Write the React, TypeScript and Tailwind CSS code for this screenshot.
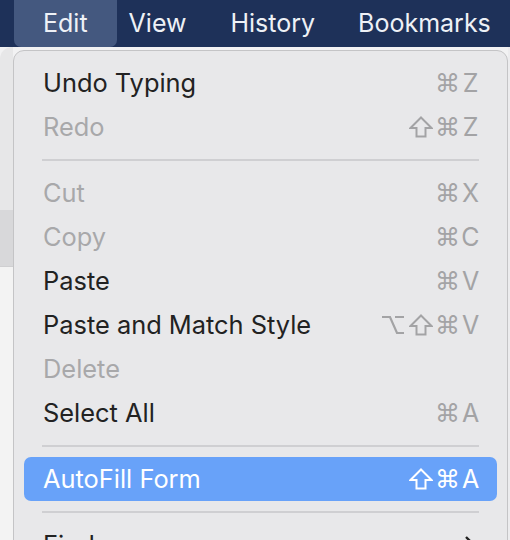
import { Fragment } from "react";

interface MenuItem {
  label: string;
  keys?: string[];
  disabled?: boolean;
  active?: boolean;
  submenu?: boolean;
  separator?: boolean;
}

const items: MenuItem[] = [
  { label: "Undo Typing", keys: ["cmd", "Z"] },
  { label: "Redo", keys: ["shift", "cmd", "Z"], disabled: true },
  { label: "", separator: true },
  { label: "Cut", keys: ["cmd", "X"], disabled: true },
  { label: "Copy", keys: ["cmd", "C"], disabled: true },
  { label: "Paste", keys: ["cmd", "V"] },
  { label: "Paste and Match Style", keys: ["opt", "shift", "cmd", "V"] },
  { label: "Delete", disabled: true },
  { label: "Select All", keys: ["cmd", "A"] },
  { label: "", separator: true },
  { label: "AutoFill Form", keys: ["shift", "cmd", "A"], active: true },
  { label: "", separator: true },
  { label: "Find", submenu: true },
];

// modifier glyphs
const KeyGlyph = ({ k, color }: { k: string; color: string }) => {
  if (k === "shift") {
    return (
      <svg width="24" height="22" viewBox="0 0 24 22">
        <path
          d="M12 1.5 L22.5 12 L16.5 12 L16.5 20.5 L7.5 20.5 L7.5 12 L1.5 12 Z"
          fill="none"
          stroke={color}
          strokeWidth="2"
          strokeLinejoin="miter"
        />
      </svg>
    );
  }
  if (k === "opt") {
    return (
      <svg width="24" height="22" viewBox="0 0 24 22">
        <path
          d="M0 3 H8 L15 19 H22 M13 3 H22"
          fill="none"
          stroke={color}
          strokeWidth="2.2"
        />
      </svg>
    );
  }
  if (k === "cmd") {
    return <span className="font-['DejaVu_Sans',sans-serif] text-[25px] leading-none">⌘</span>;
  }
  return <span className="text-[25px] leading-none">{k}</span>;
};

const App = () => {
  return (
    <div className="w-[510px] h-[540px] overflow-hidden bg-[#f2f2f3] font-['Inter','Liberation_Sans',sans-serif]">
      {/* Menu bar */}
      <div className="h-[47px] bg-[#1e3159] flex items-stretch pl-[14px] text-[25px] text-[#eef1f6]">
        <div className="bg-[#44587f] rounded-b-[7px] px-[29px] flex items-center">Edit</div>
        <div className="ml-[12px] flex items-center">View</div>
        <div className="ml-[44px] flex items-center">History</div>
        <div className="ml-[43px] flex items-center">Bookmarks</div>
      </div>

      <div className="flex">
        {/* window behind the menu */}
        <div className="w-[13px] flex flex-col">
          <div className="h-[163px] bg-[#e7e7e8] rounded-tl-[12px]"></div>
          <div className="h-[57px] bg-[#d8d8da] border-b border-[#cfcfd1]"></div>
          <div className="h-[280px] bg-[#f3f3f3]"></div>
        </div>

        {/* Menu */}
        <div className="mt-[3px] w-[495px] h-[520px] bg-[#e8e8ea] border border-[#c4c4c6] rounded-[11px] pt-[10px] px-[10px]">
          {items.map((item, idx) => (
            <Fragment key={idx}>
              {item.separator ? (
                <div className="h-[22px] flex items-center px-[18px]">
                  <div className="h-[2px] w-full bg-[#cfcfd2]"></div>
                </div>
              ) : (
                <div
                  className={
                    "h-[44px] flex items-center justify-between pl-[19px] pr-[17px] rounded-[7px] text-[25.4px] " +
                    (item.active
                      ? "bg-[#68a2f9] text-white"
                      : item.disabled
                      ? "text-[#a8a8aa]"
                      : "text-[#222222]")
                  }
                >
                  <span>{item.label}</span>
                  {item.keys && (
                    <span
                      className={
                        "flex items-center " + (item.active ? "text-white" : "text-[#a3a3a5]")
                      }
                    >
                      {item.keys.map((k, i) => (
                        <span
                          key={i}
                          className={
                            i === item.keys!.length - 1
                              ? "w-[19px] flex justify-center"
                              : "w-[27px] flex justify-center"
                          }
                        >
                          <KeyGlyph k={k} color={item.active ? "#ffffff" : "#a3a3a5"} />
                        </span>
                      ))}
                    </span>
                  )}
                  {item.submenu && (
                    <svg width="12" height="20" viewBox="0 0 12 20" className="mr-[4px]">
                      <path d="M2 2 L10 10 L2 18" fill="none" stroke="#222" strokeWidth="2.4" />
                    </svg>
                  )}
                </div>
              )}
            </Fragment>
          ))}
        </div>

        <div className="w-[2px] bg-[#ececee]"></div>
      </div>
    </div>
  );
};

export default App;
